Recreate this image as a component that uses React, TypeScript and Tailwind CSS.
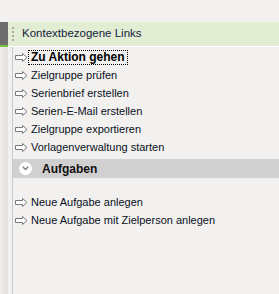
import React from "react";

function Arrow() {
  return (
    <svg width="13" height="9" viewBox="0 0 13 9" className="flex-shrink-0">
      <path
        d="M0.5 2.5 H7.5 V0.5 L12 4.5 L7.5 8.5 V6.5 H0.5 Z"
        fill="#ffffff"
        stroke="#7a7a7a"
        strokeWidth="1"
        strokeLinejoin="miter"
      />
    </svg>
  );
}

function LinkRow({ label, focused }: { label: string; focused?: boolean }) {
  return (
    <div className="flex items-center h-[18px] pl-[2px]">
      <Arrow />
      {focused ? (
        <span className="font-bold text-[12px] border border-dotted border-black px-[2px] leading-[13px] text-[#000]">
          {label}
        </span>
      ) : (
        <span className="pl-[3px] text-[11px] text-[#0a1022]">{label}</span>
      )}
    </div>
  );
}

export default function App() {
  const links = [
    "Zielgruppe prüfen",
    "Serienbrief erstellen",
    "Serien-E-Mail erstellen",
    "Zielgruppe exportieren",
    "Vorlagenverwaltung starten",
  ];

  return (
    <div
      className="w-[279px] h-[294px] overflow-hidden bg-[#f2f1ef] flex flex-col text-[12px]"
      style={{ fontFamily: '"Liberation Sans", Arial, sans-serif' }}
    >
      {/* Top spacer */}
      <div className="h-[22px] flex-shrink-0" />

      {/* Context links header */}
      <div className="flex h-[25px] flex-shrink-0">
        <div className="w-[8px] flex flex-col">
          <div className="flex-1 bg-[#6e6e6e]" />
          <div className="h-[2px] bg-[#7cc242]" />
        </div>
        <div className="flex-1 flex flex-col">
          <div className="flex-1 bg-[#e2edd3] flex items-center">
            <div className="flex flex-col gap-[2px] ml-[4px] mr-[8px]">
              <div className="w-[2px] h-[2px] bg-[#a8a8a8]" />
              <div className="w-[2px] h-[2px] bg-[#a8a8a8]" />
              <div className="w-[2px] h-[2px] bg-[#a8a8a8]" />
              <div className="w-[2px] h-[2px] bg-[#a8a8a8]" />
            </div>
            <span className="text-[#14223d] text-[11.5px]">Kontextbezogene Links</span>
          </div>
          <div className="h-[1px] bg-white" />
        </div>
      </div>

      {/* Body */}
      <div className="flex flex-1">
        <div className="flex w-[12px] flex-shrink-0">
          <div className="w-[3px] bg-[#efeeec]" />
          <div className="w-[5px] bg-[#e5e4e2]" />
          <div className="w-[4px] bg-[#f2f1ef]" />
        </div>
        <div className="flex-1 border-l border-[#c9c9c9] flex flex-col">
          <div className="pt-[1px]">
            <LinkRow label="Zu Aktion gehen" focused />
            {links.map((l) => (
              <LinkRow key={l} label={l} />
            ))}
          </div>

          <div className="mt-[3px] h-[20px] bg-[#d0d0d0] flex items-center border-b border-[#ececec]">
            <div className="ml-[6px] w-[13px] h-[13px] rounded-full bg-white flex items-center justify-center">
              <svg width="7" height="5" viewBox="0 0 7 5">
                <path d="M0.8 0.8 L3.5 3.6 L6.2 0.8" fill="none" stroke="#7d7d7d" strokeWidth="1.4" />
              </svg>
            </div>
            <span className="ml-[10px] font-bold text-[#111]">Aufgaben</span>
          </div>

          <div className="pt-[14px]">
            <LinkRow label="Neue Aufgabe anlegen" />
            <LinkRow label="Neue Aufgabe mit Zielperson anlegen" />
          </div>
        </div>
      </div>
    </div>
  );
}
